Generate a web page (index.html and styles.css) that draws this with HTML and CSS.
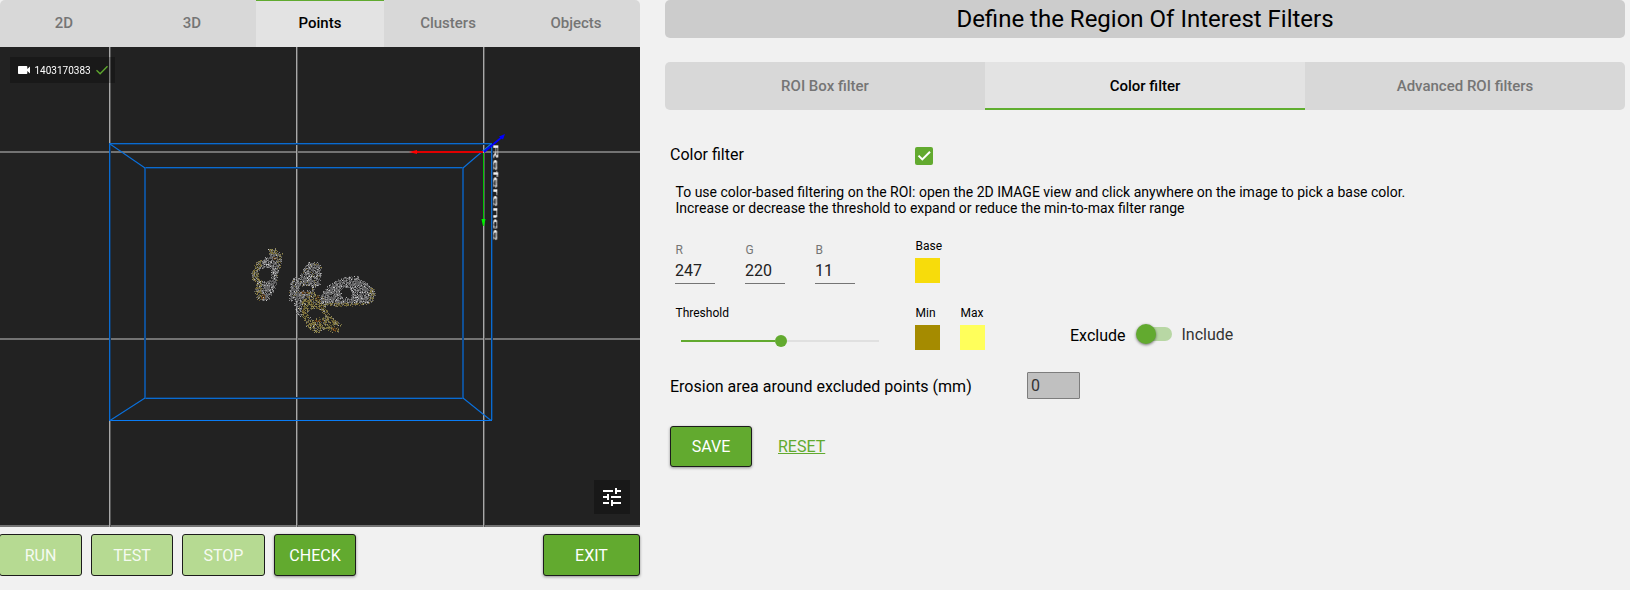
FILE: index.html
```html
<!DOCTYPE html>
<html lang="en">
<head>
<meta charset="utf-8">
<title>Region Of Interest Filters</title>
<link rel="stylesheet" href="styles.css">
</head>
<body>
<div class="app">
  <section class="viewer">
    <nav class="tabs view-tabs">
      <div class="tab">2D</div>
      <div class="tab">3D</div>
      <div class="tab active">Points</div>
      <div class="tab">Clusters</div>
      <div class="tab">Objects</div>
    </nav>
    <div class="scene">
      <svg class="scene-svg" viewBox="0 47 640 480" width="640" height="480" shape-rendering="crispEdges">
        <g fill="#737373">
          <rect x="0" y="151" width="640" height="2"/>
          <rect x="0" y="338" width="640" height="2"/>
          <rect x="0" y="525" width="640" height="2"/>
        </g>
        <g fill="#a8a8a8">
          <rect x="109" y="47" width="1" height="480"/>
          <rect x="296" y="47" width="1" height="480"/>
          <rect x="483" y="47" width="1" height="480"/>
        </g>
        <g fill="#585858">
          <rect x="110" y="47" width="1" height="480"/>
          <rect x="297" y="47" width="1" height="480"/>
          <rect x="484" y="47" width="1" height="480"/>
        </g>
        <g fill="#0a6bd0">
          <rect x="109" y="143" width="383" height="1"/>
          <rect x="145" y="167" width="318" height="1"/>
          <rect x="145" y="398" width="318" height="1"/>
          <rect x="109" y="143" width="1" height="278"/>
          <rect x="491" y="143" width="1" height="278"/>
        </g>
        <g fill="#143a63">
          <rect x="110" y="144" width="381" height="1"/>
          <rect x="145" y="168" width="318" height="1"/>
          <rect x="145" y="397" width="318" height="1"/>
          <rect x="110" y="144" width="1" height="276"/>
          <rect x="492" y="144" width="1" height="276"/>
        </g>
        <g fill="#105096">
          <rect x="144" y="167" width="2" height="232"/>
          <rect x="462" y="167" width="2" height="232"/>
        </g>
        <rect x="109" y="420" width="383" height="1" fill="#0a7cf5"/>
        <g stroke="#0a70dc" stroke-width="1.1" shape-rendering="auto">
          <path d="M110 144L145 168M491 144L463 168M110 420.500L145 398M491 420.500L463 398"/>
        </g>
        <rect x="414" y="151" width="69" height="2" fill="#e00000"/>
        <rect x="483" y="153" width="1" height="68" fill="#00c800"/>
        <g shape-rendering="auto">
          <path d="M409 152L417 150V154Z" fill="#f00"/>
          <path d="M481.500 219H485.500L484 226H483Z" fill="#00f000"/>
          <path d="M484 152L502 137" stroke="#00f" stroke-width="1.800"/>
          <path d="M505 134L503 139.500L499 136.500Z" fill="#00f"/>
        </g>
      </svg>
      <canvas class="cloud" id="cloud" width="640" height="480"></canvas>
      <div class="ref-label">Reference</div>
      <div class="camera">
        <svg width="12" height="8" viewBox="0 0 12 8"><path fill="#fff" d="M.8 0H8.500Q9.300 0 9.300 .8V3L12 .4V7.600L9.300 5V7.200Q9.300 8 8.500 8H.8Q0 8 0 7.200V.8Q0 0 .8 0Z"/></svg>
        <span>1403170383</span>
        <svg class="camera-ok" width="12" height="10" viewBox="0 0 12 10"><path fill="none" stroke="#5fa92e" stroke-width="1.300" d="M.5 5.300L4.100 8.800L11.500 1.200"/></svg>
      </div>
      <div class="settings">
        <svg width="24" height="24" viewBox="0 0 24 24"><path fill="#fff" d="M3 17v2h6v-2H3zM3 5v2h10V5H3zm10 16v-2h8v-2h-8v-2h-2v6h2zM7 9v2H3v2h4v2h2V9H7zm14 4v-2H11v2h10zm-6-4h2V7h4V5h-4V3h-2v6z"/></svg>
      </div>
    </div>
    <div class="actions">
      <div class="btn disabled run">RUN</div>
      <div class="btn disabled">TEST</div>
      <div class="btn disabled stop">STOP</div>
      <div class="btn">CHECK</div>
      <div class="btn exit">EXIT</div>
    </div>
  </section>

  <main class="panel">
    <h1 class="title">Define the Region Of Interest Filters</h1>
    <nav class="tabs filter-tabs">
      <div class="tab">ROI Box filter</div>
      <div class="tab active">Color filter</div>
      <div class="tab">Advanced ROI filters</div>
    </nav>
    <div class="row enable">
      <span class="enable-label">Color filter</span>
      <span class="checkbox"><svg width="18" height="18" viewBox="0 0 18 18"><path fill="none" stroke="#fff" stroke-width="2" d="M3.500 8.600L7.300 12.400L15 4.700"/></svg></span>
    </div>
    <p class="help">To use color-based filtering on the ROI: open the 2D IMAGE view and click anywhere on the image to pick a base color.<br>Increase or decrease the threshold to expand or reduce the min-to-max filter range</p>
    <div class="row rgb">
      <div class="fields">
        <div class="field"><label>R</label><span>247</span></div>
        <div class="field"><label>G</label><span>220</span></div>
        <div class="field"><label>B</label><span>11</span></div>
      </div>
      <div class="swatch"><label>Base</label><i class="base"></i></div>
    </div>
    <div class="row range">
      <div class="threshold">
        <label>Threshold</label>
        <div class="slider"><div class="fill"></div><div class="knob"></div><div class="rest"></div></div>
      </div>
      <div class="swatch"><label>Min</label><i class="min"></i></div>
      <div class="swatch"><label>Max</label><i class="max"></i></div>
      <div class="mode">
        <span class="exclude">Exclude</span>
        <span class="toggle"><b></b></span>
        <span class="include">Include</span>
      </div>
    </div>
    <div class="row erosion">
      <span class="erosion-label">Erosion area around excluded points (mm)</span>
      <span class="number">0</span>
    </div>
    <div class="row submit">
      <div class="btn">SAVE</div>
      <a class="reset">RESET</a>
    </div>
  </main>
</div>
<script src="cloud.js"></script>
</body>
</html>
```
FILE: cloud.js
```js
// Draws the scanned objects as a point cloud; coordinates are in thirds of a pixel.
(function () {
  var ctx = document.getElementById('cloud').getContext('2d');
  var OX = 230, OY = 183, seed = 7;
  function rnd() {
    seed = (seed * 1103515245 + 12345) % 2147483648;
    return seed / 2147483648;
  }
  function inside(p, x, y) {
    var r = false;
    for (var i = 0, j = p.length - 1; i < p.length; j = i++) {
      var a = p[i], b = p[j];
      if ((a[1] > y) !== (b[1] > y) && x < (b[0] - a[0]) * (y - a[1]) / (b[1] - a[1]) + a[0]) r = !r;
    }
    return r;
  }
  var bodies = [
    { p: [[116,56],[137,56],[140,66],[154,68],[153,98],[145,125],[134,175],[112,210],[83,212],[74,185],[78,155],[63,148],[66,125],[78,93],[100,86],[116,80]],
      h: [[[92,114],[122,112],[125,146],[104,153],[84,145],[84,124]]] },
    { p: [[233,96],[268,98],[274,120],[267,165],[246,170],[258,193],[287,205],[288,233],[302,260],[332,280],[324,304],[300,305],[290,294],[262,308],[233,297],[220,262],[198,250],[193,215],[176,208],[180,158],[190,140],[208,143],[220,113]],
      h: [[[208,168],[242,166],[244,186],[235,180],[208,181]], [[238,238],[255,233],[276,243],[282,260],[250,268],[233,258]]] },
    { p: [[270,199],[288,175],[316,150],[350,140],[384,138],[389,148],[407,156],[432,176],[436,195],[427,217],[380,224],[330,229],[272,224]],
      h: [[[340,173],[358,173],[366,188],[361,203],[340,203],[330,188]]] }
  ];
  function colour(k, x, y) {
    var r = rnd(), olive = k === 0 ? (x < 95 && r < .6) || (y < 72 && r < .7) || (x > 140 && r < .35)
      : k === 1 ? (y > 205 && x > 215 && r < .85) || (y > 185 && x > 235 && r < .7) || r < .06
      : (y > 218 && r < .7) || (x > 415 && r < .4);
    var orange = k === 0 ? Math.hypot(x - 97, y - 198) < 8 || Math.hypot(x - 133, y - 84) < 6
      : k === 1 ? (y > 180 && y < 190 && x > 205 && x < 234) || Math.hypot(x - 262, y - 203) < 6 || (y > 268 && y < 276 && x > 250 && x < 280) || Math.hypot(x - 314, y - 293) < 9
      : false;
    if (orange && rnd() < .7) return ['#5a3a18', '#744516', '#49351c'][Math.floor(rnd() * 3)];
    if (olive) return ['#77713c', '#857845', '#5b562f', '#918a56', '#6a5a2c'][Math.floor(rnd() * 5)];
    var g = rnd(), v = g < .7 ? 84 + g * 35 : g < .93 ? 130 + rnd() * 25 : 170 + rnd() * 35;
    v = Math.round(v);
    return 'rgb(' + v + ',' + v + ',' + (v + 1) + ')';
  }
  bodies.forEach(function (b, k) {
    for (var y = 54; y < 312; y += 3) for (var x = 60; x < 441; x += 3) {
      var jx = x + (rnd() - .5) * 6, jy = y + (rnd() - .5) * 6;
      if (!inside(b.p, jx, jy) || b.h.some(function (h) { return inside(h, jx, jy); })) continue;
      if (rnd() > (k === 1 && y > 200 ? .7 : .84)) continue;
      ctx.fillStyle = colour(k, x, y);
      ctx.fillRect(OX + x / 3, OY + y / 3, 1, 1);
    }
  });
})();
```
FILE: styles.css
```css
* { box-sizing: border-box; }
body { margin: 0; background: #f1f1f1; color: #000; font-family: Roboto, sans-serif; }
.app { display: flex; width: 1630px; height: 590px; overflow: hidden; }
.viewer { width: 640px; flex: none; }
.tabs { display: flex; background: #d8d8d8; border-radius: 5px; overflow: hidden; font-size: 15px; font-weight: 500; color: #757575; }
.tab { flex: 1; display: flex; align-items: center; justify-content: center; }
.tab.active { background: #e3e3e3; color: #000; }
.view-tabs { height: 47px; border-radius: 5px 5px 0 0; }
.view-tabs .tab { padding-bottom: 1px; }
.view-tabs .active { box-shadow: inset 0 1px #60aa30; }
.scene { position: relative; height: 480px; background: #222; }
.scene-svg, .cloud { position: absolute; left: 0; top: 0; display: block; }
.ref-label { position: absolute; left: 499px; top: 97px; color: #f0f0f0; font: 20px/20px "Liberation Sans", sans-serif; -webkit-text-stroke: .4px #f0f0f0; transform-origin: 0 0; transform: rotate(90deg) scale(1.05, .33); white-space: nowrap; }
.camera { position: absolute; left: 10px; top: 10px; width: 105px; height: 26px; padding-left: 8px; display: flex; align-items: center; background: rgba(0,0,0,.25); color: #fff; font-size: 10px; }
.camera span { margin: 0 5px 0 4.500px; width: 56px; }
.settings { position: absolute; left: 594px; top: 433px; width: 36px; height: 34px; display: flex; align-items: center; justify-content: center; background: #181818; }
.actions { display: flex; gap: 9px; padding-top: 7px; }
.btn { width: 82px; height: 42px; display: flex; align-items: center; justify-content: center; border: 1px solid #1c1c1c; border-radius: 3px; background: #62aa2f; color: #fff; font-size: 16px; box-shadow: 0 1px 3px rgba(0,0,0,.4); }
.btn.disabled { background: #b6da92; box-shadow: none; color: rgba(255,255,255,.9); }
.btn.run { width: 83px; margin-left: -1px; }
.btn.stop { width: 83px; }
.btn.exit { width: 97px; margin-left: auto; }
.panel { width: 960px; margin-left: 25px; }
.title { margin: 0; height: 38px; line-height: 38px; text-align: center; background: #ccc; border-radius: 5px; font-size: 24px; font-weight: 400; }
.filter-tabs { margin-top: 24px; height: 48px; }
.filter-tabs .active { box-shadow: inset 0 -2px #60ae30; }
.row { display: flex; }
.enable { height: 55px; padding: 30px 0 0 5px; font-size: 16px; }
.enable-label { width: 245px; line-height: 30px; }
.checkbox { width: 18px; height: 18px; margin-top: 7px; border-radius: 2px; background: #62aa2f; }
.checkbox svg { display: block; }
.help { margin: 19px 0 0 10.500px; font-size: 14px; line-height: 16px; }
.rgb { margin-top: 23px; padding-left: 10px; height: 67px; }
.fields { display: flex; gap: 30px; width: 240px; padding-top: 4px; }
.field { width: 40px; height: 41px; border-bottom: 1px solid #757575; }
label { display: block; padding-left: .5px; font-size: 12px; line-height: 14px; }
.field label { color: #757575; }
.field span { display: block; margin-top: 5px; font-size: 16px; line-height: 18px; color: #222; }
.swatch { width: 45px; }
.swatch i { display: block; width: 25px; height: 25px; margin-top: 5px; }
.base { background: #f7dc0b; }
.min { background: #a58b00; }
.max { background: #ffff5b; }
.range { padding-left: 10px; height: 66px; }
.threshold { width: 240px; }
.slider { display: flex; align-items: center; width: 198px; height: 12px; margin: 15px 0 0 6px; }
.fill { width: 94px; height: 2px; background: #62aa2f; }
.knob { width: 12px; height: 12px; border-radius: 50%; background: #62aa2f; }
.rest { flex: 1; height: 2px; background: #e0e0e0; }
.mode { display: flex; margin-left: 65px; height: 40px; padding-top: 17px; font-size: 16px; line-height: 36px; }
.mode .exclude { width: 68px; line-height: 38px; margin-top: -6px; }
.mode .include { margin: -6px 0 0 9.500px; color: #333; }
.toggle { width: 34px; height: 14px; margin: 4px 0 0; border-radius: 7px; background: #b8d7a4; }
.toggle b { display: block; width: 20px; height: 20px; margin: -3px 0 0 -2px; border-radius: 50%; background: #62aa2f; box-shadow: 0 1px 3px rgba(0,0,0,.55); }
.erosion { padding-left: 5px; font-size: 16px; height: 54px; }
.erosion-label { width: 357px; line-height: 29px; }
.number { width: 53px; height: 27px; border: 1px solid #7d7d7d; border-radius: 1px; background: #c0c0c0; color: #333; padding-left: 3px; line-height: 25px; }
.submit { padding-left: 5px; }
.submit .btn { height: 41px; }
.reset { margin-left: 26px; line-height: 42px; font-size: 16px; color: #62aa2f; text-decoration: underline; }
```
